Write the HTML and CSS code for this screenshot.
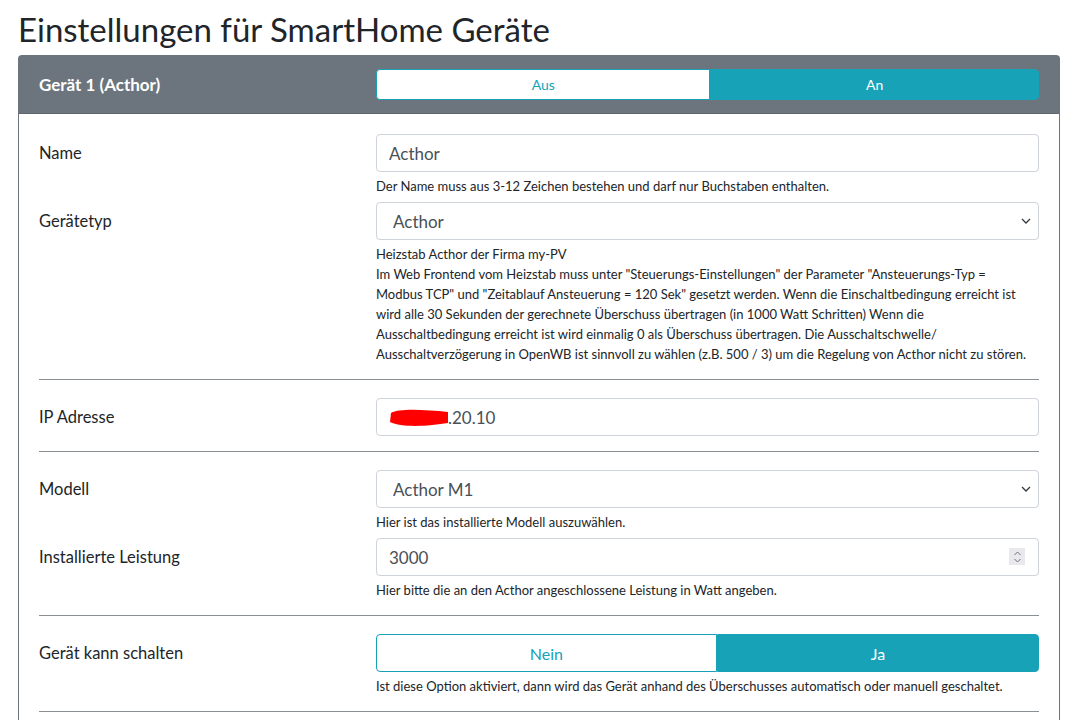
FILE: index.html
```html
<!DOCTYPE html>
<html lang="de">
<head>
  <meta charset="UTF-8">
  <title>SmartHome Einstellungen</title>
  <link rel="stylesheet" href="styles.css">
</head>
<body>
  <div class="container">
    <h1 class="page-title">Einstellungen für SmartHome Geräte</h1>

    <div class="card">
      <div class="card-header">
        <div class="device-title">Gerät 1 (Acthor)</div>
        <div class="btn-group btn-group-sm">
          <button class="btn btn-outline">Aus</button>
          <button class="btn btn-active">An</button>
        </div>
      </div>

      <div class="card-body">
        <div class="form-row">
          <label class="form-label">Name</label>
          <div class="form-field">
            <input class="form-control" type="text" value="Acthor">
            <small class="form-text">Der Name muss aus 3-12 Zeichen bestehen und darf nur Buchstaben enthalten.</small>
          </div>
        </div>

        <div class="form-row">
          <label class="form-label">Gerätetyp</label>
          <div class="form-field">
            <div class="select-wrap">
              <select class="form-control custom-select"><option>Acthor</option></select>
              <svg class="select-arrow" width="10" height="8" viewBox="0 0 10 8"><path d="M1 2l4 4 4-4" fill="none" stroke="#343a40" stroke-width="1.3"/></svg>
            </div>
            <small class="form-text">Heizstab Acthor der Firma my-PV<br>Im Web Frontend vom Heizstab muss unter "Steuerungs-Einstellungen" der Parameter "Ansteuerungs-Typ =<br>Modbus TCP" und "Zeitablauf Ansteuerung = 120 Sek" gesetzt werden. Wenn die Einschaltbedingung erreicht ist<br>wird alle 30 Sekunden der gerechnete Überschuss übertragen (in 1000 Watt Schritten) Wenn die<br>Ausschaltbedingung erreicht ist wird einmalig 0 als Überschuss übertragen. Die Ausschaltschwelle/<br>Ausschaltverzögerung in OpenWB ist sinnvoll zu wählen (z.B. 500 / 3) um die Regelung von Acthor nicht zu stören.</small>
          </div>
        </div>

        <hr>

        <div class="form-row">
          <label class="form-label">IP Adresse</label>
          <div class="form-field">
            <div class="form-control fake-input">
              <svg class="scribble" width="62" height="22" viewBox="0 0 62 22"><path d="M3 7 C12 2 38 4 60 6 L60 17 C42 20 14 22 2 16 Z" fill="#ff0000"/></svg><span>.20.10</span>
            </div>
          </div>
        </div>

        <hr>

        <div class="form-row">
          <label class="form-label">Modell</label>
          <div class="form-field">
            <div class="select-wrap">
              <select class="form-control custom-select"><option>Acthor M1</option></select>
              <svg class="select-arrow" width="10" height="8" viewBox="0 0 10 8"><path d="M1 2l4 4 4-4" fill="none" stroke="#343a40" stroke-width="1.3"/></svg>
            </div>
            <small class="form-text">Hier ist das installierte Modell auszuwählen.</small>
          </div>
        </div>

        <div class="form-row">
          <label class="form-label">Installierte Leistung</label>
          <div class="form-field">
            <div class="select-wrap">
              <input class="form-control" type="text" value="3000">
              <span class="spinner">
                <svg width="9" height="14" viewBox="0 0 9 14"><path d="M1.5 5l3-3 3 3M1.5 9l3 3 3-3" fill="none" stroke="#6c757d" stroke-width="1"/></svg>
              </span>
            </div>
            <small class="form-text">Hier bitte die an den Acthor angeschlossene Leistung in Watt angeben.</small>
          </div>
        </div>

        <hr>

        <div class="form-row">
          <label class="form-label">Gerät kann schalten</label>
          <div class="form-field">
            <div class="btn-group">
              <button class="btn btn-outline">Nein</button>
              <button class="btn btn-active">Ja</button>
            </div>
            <small class="form-text">Ist diese Option aktiviert, dann wird das Gerät anhand des Überschusses automatisch oder manuell geschaltet.</small>
          </div>
        </div>

        <hr>
      </div>
    </div>
  </div>
</body>
</html>
```

FILE: styles.css
```css
:root {
  --secondary: #6c757d;
  --info: #17a2b8;
  --text: #212529;
  --input-text: #495057;
  --input-border: #ced4da;
}

body {
  margin: 0;
  font-family: Lato, "Noto Sans", sans-serif;
  font-size: 16px;
  color: var(--text);
  background-color: #fff;
}

.container {
  padding: 0 14px 0 18px;
}

.page-title {
  font-size: 33px;
  font-weight: 400;
  line-height: 40px;
  margin: 9px 0 6px 0;
}

.card {
  border: 1px solid var(--secondary);
  border-radius: 4px 4px 0 0;
  border-bottom: none;
}

.card-header {
  display: grid;
  grid-template-columns: 337px 1fr;
  align-items: center;
  background-color: var(--secondary);
  padding: 13px 20px 13px 20px;
  border-bottom: 1px solid #5f676e;
}

.device-title {
  color: #fff;
  font-weight: 700;
  font-size: 17px;
}

.btn-group {
  display: flex;
}

.btn {
  flex: 1 1 auto;
  padding: 0 12px;
  font-family: inherit;
  font-size: 16px;
  height: 38px;
  border: 1px solid var(--info);
  cursor: pointer;
  margin: 0;
}

.btn-group-sm .btn {
  height: 31px;
  font-size: 14px;
}

.btn-outline {
  background-color: #fff;
  color: var(--info);
  border-radius: 4px 0 0 4px;
}

.btn-active {
  background-color: var(--info);
  color: #fff;
  border-radius: 0 4px 4px 0;
}

.card-body {
  padding: 20px 20px 6px 20px;
}

.form-row {
  display: grid;
  grid-template-columns: 337px 1fr;
  margin-bottom: 6px;
}

.form-label {
  font-size: 16.5px;
  padding-top: 9px;
}

.form-control {
  display: block;
  box-sizing: border-box;
  width: 100%;
  height: 38px;
  padding: 6px 12px;
  font-family: inherit;
  font-size: 17px;
  color: var(--input-text);
  background-color: #fff;
  border: 1px solid var(--input-border);
  border-radius: 4px;
  margin: 0;
}

.fake-input {
  display: flex;
  align-items: center;
}

.scribble {
  margin-left: -1px;
  margin-right: -2px;
}

.select-wrap {
  position: relative;
}

.custom-select {
  appearance: none;
  -webkit-appearance: none;
  padding-left: 16px;
}

.select-arrow {
  position: absolute;
  right: 8px;
  top: 15px;
}

.spinner {
  position: absolute;
  right: 14px;
  top: 10px;
  width: 16px;
  height: 17px;
  background-color: #e9e9ed;
  display: flex;
  align-items: center;
  justify-content: center;
}

.form-text {
  display: block;
  font-size: 13px;
  line-height: 20px;
  margin-top: 4px;
}

hr {
  border: 0;
  border-top: 1px solid #8a8f94;
  margin: 15px 0 18px 0;
}
```
